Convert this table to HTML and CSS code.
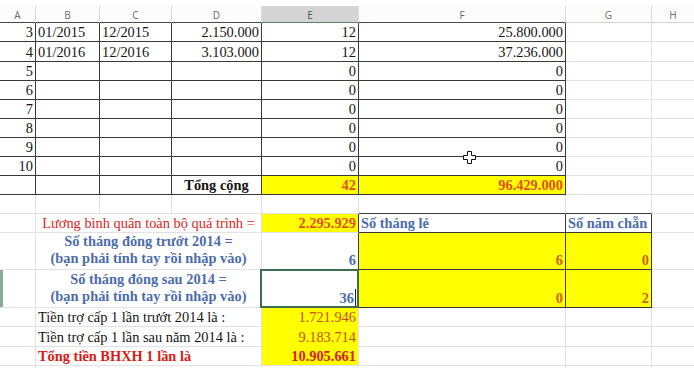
FILE: index.html
```html
<!DOCTYPE html>
<html lang="vi">
<head>
<meta charset="utf-8">
<title>BHXH</title>
<link rel="stylesheet" href="styles.css">
</head>
<body>
<div class="top"></div>
<div class="sheet">
  <div class="h">A</div><div class="h">B</div><div class="h">C</div><div class="h">D</div><div class="h sel">E</div><div class="h">F</div><div class="h lt">G</div><div class="h lt">H</div>

  <div class="c r dr db">3</div><div class="c dr db">01/2015</div><div class="c dr db">12/2015</div><div class="c r dr db">2.150.000</div><div class="c r dr db">12</div><div class="c r dr db">25.800.000</div><div class="c"></div><div class="c"></div>
  <div class="c r dr db">4</div><div class="c dr db">01/2016</div><div class="c dr db">12/2016</div><div class="c r dr db">3.103.000</div><div class="c r dr db">12</div><div class="c r dr db">37.236.000</div><div class="c"></div><div class="c"></div>
  <div class="c r dr db">5</div><div class="c dr db"></div><div class="c dr db"></div><div class="c r dr db"></div><div class="c r dr db">0</div><div class="c r dr db">0</div><div class="c"></div><div class="c"></div>
  <div class="c r dr db">6</div><div class="c dr db"></div><div class="c dr db"></div><div class="c r dr db"></div><div class="c r dr db">0</div><div class="c r dr db">0</div><div class="c"></div><div class="c"></div>
  <div class="c r dr db">7</div><div class="c dr db"></div><div class="c dr db"></div><div class="c r dr db"></div><div class="c r dr db">0</div><div class="c r dr db">0</div><div class="c"></div><div class="c"></div>
  <div class="c r dr db">8</div><div class="c dr db"></div><div class="c dr db"></div><div class="c r dr db"></div><div class="c r dr db">0</div><div class="c r dr db">0</div><div class="c"></div><div class="c"></div>
  <div class="c r dr db">9</div><div class="c dr db"></div><div class="c dr db"></div><div class="c r dr db"></div><div class="c r dr db">0</div><div class="c r dr db">0</div><div class="c"></div><div class="c"></div>
  <div class="c r dr db">10</div><div class="c dr db"></div><div class="c dr db"></div><div class="c r dr db"></div><div class="c r dr db">0</div><div class="c r dr db">0</div><div class="c"></div><div class="c"></div>

  <div class="c dr db"></div><div class="c dr db"></div><div class="c dr db"></div><div class="c m b dr db">Tổng cộng</div><div class="c r b org y dr db">42</div><div class="c r b org y dr db">96.429.000</div><div class="c"></div><div class="c"></div>

  <div class="c"></div><div class="c"></div><div class="c"></div><div class="c"></div><div class="c"></div><div class="c db"></div><div class="c db"></div><div class="c"></div>

  <div class="c"></div><div class="c m span3 red">Lương bình quân toàn bộ quá trình =</div><div class="c r b org y dr lb">2.295.929</div><div class="c b blue dr db">Số tháng lẻ</div><div class="c b blue dr db">Số năm chẵn</div><div class="c"></div>

  <div class="c"></div><div class="c two span3 b blue"><span>Số tháng đóng trướt 2014 =</span><span>(bạn phải tính tay rồi nhập vào)</span></div><div class="c r b blue dr">6</div><div class="c r y val dr db">6</div><div class="c r y val dr db">0</div><div class="c"></div>

  <div class="c rowsel"></div><div class="c two span3 b blue"><span>Số tháng đóng sau 2014 =</span><span>(bạn phải tính tay rồi nhập vào)</span></div><div class="c r b blue dr selbox">36<span class="caret"></span></div><div class="c r y val dr db">0</div><div class="c r y val dr db">2</div><div class="c"></div>

  <div class="c"></div><div class="c span3">Tiền trợ cấp 1 lần trướt 2014 là :</div><div class="c r y org2 lr">1.721.946</div><div class="c"></div><div class="c"></div><div class="c"></div>
  <div class="c"></div><div class="c span3">Tiền trợ cấp 1 lần sau năm 2014 là :</div><div class="c r y org2 lr">9.183.714</div><div class="c"></div><div class="c"></div><div class="c"></div>
  <div class="c"></div><div class="c span3 b red2">Tổng tiền BHXH 1 lần là</div><div class="c r y b red2 lr lb">10.905.661</div><div class="c"></div><div class="c"></div><div class="c"></div>
  <div class="c"></div><div class="c"></div><div class="c"></div><div class="c"></div><div class="c"></div><div class="c"></div><div class="c"></div><div class="c"></div>
</div>
<svg class="cursor" width="13" height="13" viewBox="0 0 13 13" aria-hidden="true">
  <path d="M4.5 0.5 H8.5 V4.5 H12.5 V8.5 H8.5 V12.5 H4.5 V8.5 H0.5 V4.5 H4.5 Z" fill="#fff" stroke="#111" stroke-width="1"/>
</svg>
</body>
</html>
```

FILE: styles.css
```css
* { box-sizing: border-box; margin: 0; padding: 0; }
html, body { width: 694px; height: 368px; overflow: hidden; background: #fff; }
body {
  font-family: "Liberation Serif", "Times New Roman", serif;
  font-size: 14.4px;
  color: #141414;
  position: relative;
}
.top { height: 6px; background: #fff; }
.sheet {
  display: grid;
  grid-template-columns: 36px 64px 72px 90px 97px 207px 86px 43px;
  grid-template-rows: 17px 19px 20px repeat(9, 19px) 37px 38px 19px 20px 19px 19px;
}
.h {
  font-family: "Open Sans", "Noto Sans", sans-serif;
  font-size: 10px;
  color: #6d6d6d;
  display: flex;
  align-items: center;
  justify-content: center;
  padding-top: 1px;
  background: #fcfcfc;
  border-right: 1px solid #dedede;
  border-bottom: 1px solid #4a4a4a;
}
.h.lt { border-bottom-color: #d2d2d2; }
.h.sel { background: #d4d4d4; color: #3a5d46; border-bottom-color: #5f8069; }
.c {
  display: flex;
  align-items: flex-end;
  padding: 0 2px 1px 2px;
  line-height: 16px;
  white-space: nowrap;
  border-right: 1px solid #e2e2e2;
  border-bottom: 1px solid #e2e2e2;
}
.r { justify-content: flex-end; }
.m { justify-content: center; }
.span3 { grid-column: span 3; }
.b { font-weight: bold; }
.y { background: #ffff00; border-color: #ffff00; }
.lr { border-right-color: #e2e2e2; }
.lb { border-bottom-color: #e2e2e2; }
.dr { border-right-color: #3a3a3a; }
.db { border-bottom-color: #3a3a3a; }
.red { color: #e01e1e; }
.red2 { color: #dc1a14; }
.blue { color: #4b6dab; }
.org { color: #e2501c; }
.org2 { color: #c94d17; }
.val { color: #c8621c; font-weight: bold; }
.two {
  flex-direction: column;
  justify-content: flex-end;
  align-items: center;
  line-height: 17px;
  padding-bottom: 2px;
}
.rowsel { box-shadow: inset 3px 0 0 #8daa95; }
.selbox { position: relative; }
.selbox::after {
  content: "";
  position: absolute;
  left: -2px;
  top: -1px;
  right: -1px;
  bottom: -1px;
  border: 2px solid #3f6b4f;
}
.caret {
  display: inline-block;
  width: 1px;
  height: 18px;
  background: #222;
  margin-left: 1px;
  margin-bottom: -1px;
}
.cursor { position: absolute; left: 463px; top: 151px; }
```
